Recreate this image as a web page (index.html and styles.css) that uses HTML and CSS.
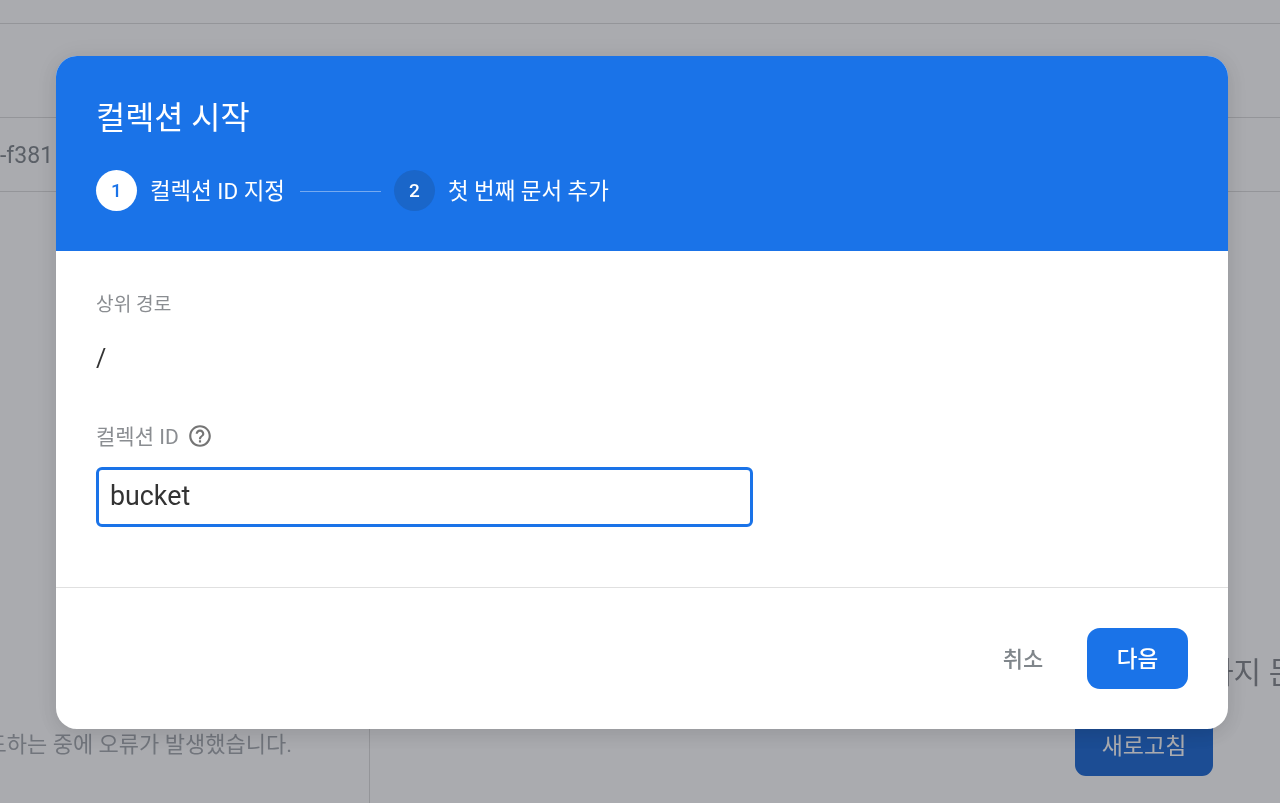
FILE: index.html
```html
<!DOCTYPE html>
<html lang="ko">
<head>
<meta charset="utf-8">
<title>컬렉션 시작</title>
<link rel="stylesheet" href="styles.css">
</head>
<body>
<div class="page">
  <div class="bar-top"></div>
  <div class="bar-mid"></div>
  <div class="bar-path"><span class="path-text">-f381</span></div>
  <div class="content">
    <div class="col-left"><p class="error-text">로드하는 중에 오류가 발생했습니다.</p></div>
    <div class="col-right">
      <p class="right-text">까지 문</p>
      <button class="refresh" type="button">새로고침</button>
    </div>
  </div>
</div>
<div class="scrim"></div>
<div class="dialog" role="dialog">
  <header class="dialog-head">
    <h1 class="dialog-title">컬렉션 시작</h1>
    <div class="stepper">
      <span class="step-num step-on">1</span>
      <span class="step-label">컬렉션 ID 지정</span>
      <span class="step-line"></span>
      <span class="step-num step-off">2</span>
      <span class="step-label">첫 번째 문서 추가</span>
    </div>
  </header>
  <div class="dialog-body">
    <div class="field-label">상위 경로</div>
    <div class="path-value">/</div>
    <div class="field-label id-label">컬렉션 ID
      <svg class="help" viewBox="0 0 24 24" width="26" height="26"><path fill="#757575" d="M11 18h2v-2h-2v2zm1-16C6.48 2 2 6.48 2 12s4.48 10 10 10 10-4.48 10-10S17.52 2 12 2zm0 18c-4.41 0-8-3.59-8-8s3.59-8 8-8 8 3.59 8 8-3.59 8-8 8zm0-14c-2.21 0-4 1.79-4 4h2c0-1.1.9-2 2-2s2 .9 2 2c0 2-3 1.75-3 5h2c0-2.25 3-2.5 3-5 0-2.21-1.79-4-4-4z"/></svg>
    </div>
    <div class="input">bucket</div>
  </div>
  <footer class="dialog-foot">
    <button class="btn-text" type="button">취소</button>
    <button class="btn-primary" type="button">다음</button>
  </footer>
</div>
</body>
</html>
```
FILE: styles.css
```css
html, body { margin: 0; height: 100%; overflow: hidden; }
body { font-family: Roboto, "Noto Sans CJK KR", sans-serif; background: #fff; position: relative; filter: blur(.45px); }
p { margin: 0; }
button { font-family: inherit; border: 0; cursor: pointer; }

.page { width: 1280px; height: 803px; display: flex; flex-direction: column; overflow: hidden; }
.bar-top { height: 23px; border-bottom: 1px solid #dcdcdc; flex: none; }
.bar-mid { height: 93px; border-bottom: 1px solid #dcdcdc; flex: none; }
.bar-path { height: 73px; border-bottom: 1px solid #dcdcdc; flex: none; display: flex; align-items: center; }
.path-text { font-size: 23px; color: #80868b; padding-top: 2px; }
.content { flex: 1; display: flex; }
.col-left { width: 369px; border-right: 1px solid #dcdcdc; flex: none; display: flex; justify-content: flex-end; overflow: hidden; }
.error-text { font-size: 22px; color: #a4a8ad; white-space: nowrap; margin: 538px 77px 0 0; line-height: 30px; }
.col-right { flex: 1; display: flex; flex-direction: column; position: relative; }
.right-text { font-size: 30px; color: #85888d; white-space: nowrap; line-height: 40px; margin: 461px 0 0 836px; }
.refresh { width: 138px; height: 64px; margin: 19px 0 0 705px; background: #1a68d4; color: #fff; font-size: 23px; border-radius: 11px; padding: 0; }

.scrim { position: absolute; inset: 0; background: rgba(32, 33, 46, .38); }

.dialog { position: absolute; left: 56px; top: 56px; width: 1172px; height: 673px; background: #fff; border-radius: 21px; overflow: hidden; display: flex; flex-direction: column; box-shadow: 0 6px 18px rgba(0,0,0,.08), 0 1px 24px rgba(0,0,0,.06); }

.dialog-head { height: 195px; flex: none; background: #1a73e8; color: #fff; padding: 41px 40px 0; box-sizing: border-box; }
.dialog-title { margin: 0; font-size: 31.7px; font-weight: 400; line-height: 44px; }
.stepper { display: flex; align-items: center; margin-top: 29px; }
.step-num { width: 41px; height: 41px; border-radius: 50%; flex: none; display: flex; align-items: center; justify-content: center; font-size: 19px; font-weight: 500; }
.step-on { background: #fff; color: #1a73e8; }
.step-off { background: #1a66c9; color: #fff; }
.step-label { font-size: 22.4px; font-weight: 400; margin-left: 13px; white-space: nowrap; padding-bottom: 3px; }
.step-line { width: 81px; height: 1px; background: #76aaf0; margin: 2px 13px 0 15px; }

.dialog-body { height: 337px; flex: none; padding: 0 40px; box-sizing: border-box; border-bottom: 1px solid #e0e0e0; }
.field-label { font-size: 19.2px; color: #8a8d91; line-height: 28px; margin-top: 40px; display: flex; align-items: center; gap: 8px; }
.path-value { font-size: 25px; color: #333; line-height: 36px; margin-top: 22px; }
.field-label.id-label { margin-top: 46px; font-size: 21px; }
.help { flex: none; margin-top: -2px; }
.input { width: 657px; height: 60px; box-sizing: border-box; margin-top: 16px; border: 3px solid #1a73e8; border-radius: 6px; font-size: 26.8px; color: #333; padding: 0 0 2px 11px; display: flex; align-items: center; }

.dialog-foot { flex: 1; display: flex; justify-content: flex-end; align-items: flex-start; padding: 40px 40px 0; gap: 33px; }
.btn-text { background: none; height: 61px; width: 62px; padding: 0 0 3px; font-size: 22px; font-weight: 500; color: #80868b; }
.btn-primary { width: 101px; height: 61px; background: #1a73e8; color: #fff; font-size: 22.5px; font-weight: 500; border-radius: 13px; padding: 0 0 3px; }
```
